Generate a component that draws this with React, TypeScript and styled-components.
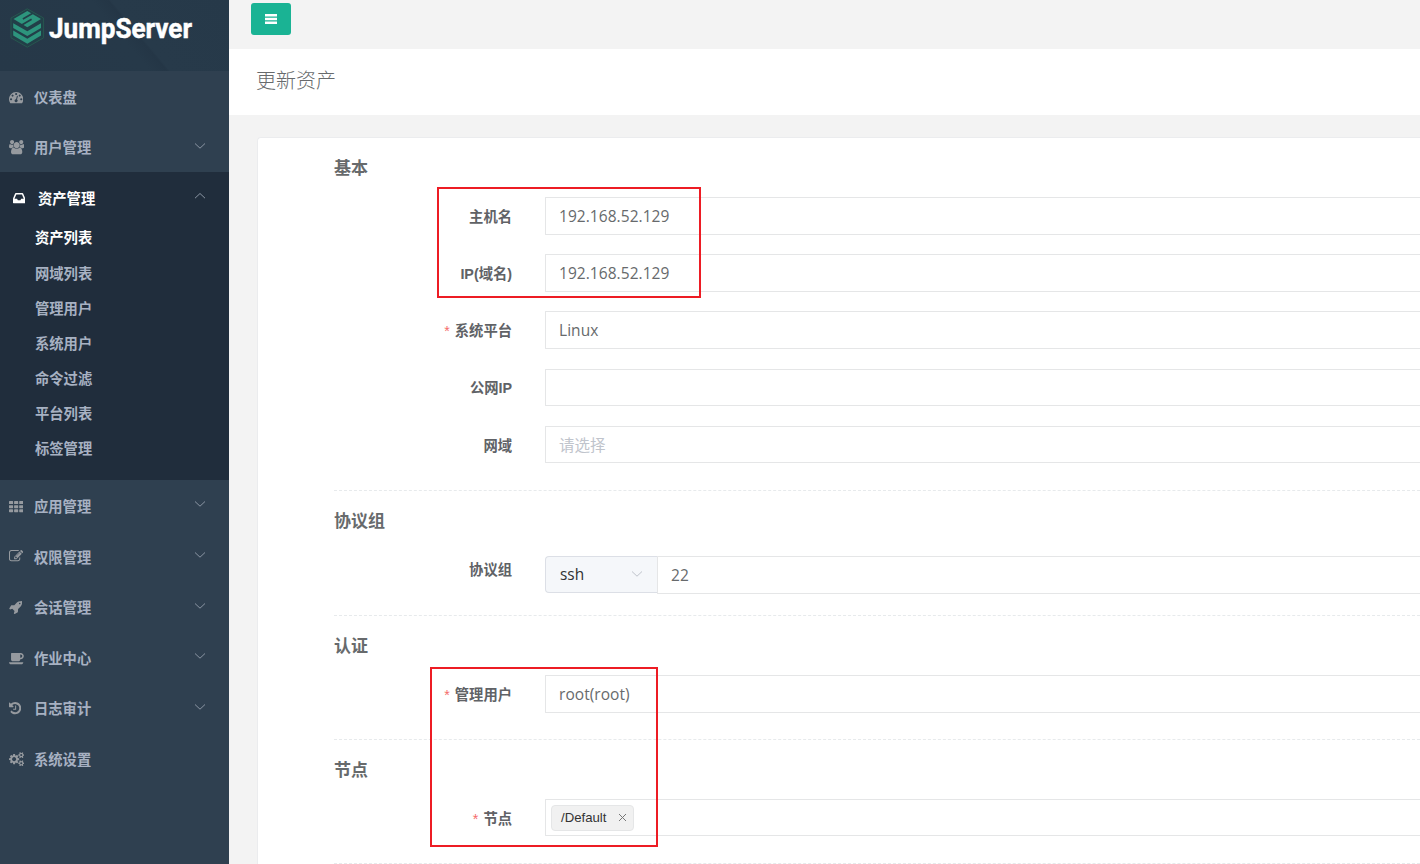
import React from 'react';
import styled, { createGlobalStyle, css } from 'styled-components';

const Global = createGlobalStyle`
  * { box-sizing: border-box; }
  html, body { margin: 0; height: 864px; overflow: hidden; }
  body {
    font-family: 'Open Sans', 'Noto Sans CJK SC', sans-serif;
    color: #676a6c;
    background: #f3f3f3;
  }
`;

const Layout = styled.div`
  display: flex;
  width: 1420px;
  height: 864px;
  overflow: hidden;
`;

const Sidebar = styled.nav`
  flex: 0 0 229px;
  background: #2f4050;
  color: #a7b1c2;
  font-family: 'Liberation Sans', 'Noto Sans CJK SC', sans-serif;
`;

const Brand = styled.header`
  height: 71px;
  padding: 8px 0 0 10px;
  display: flex;
  align-items: flex-start;
  background: linear-gradient(50deg, #263848 0%, #263949 52%, #243646 58%, #273a4a 59%, #263949 100%);
`;

const Group = styled.section<{ $active?: boolean }>`
  ${p => p.$active && css`
    background: #202d3c;
    padding-bottom: 14.8px;
  `}
`;

const MenuRow = styled.div<{ $active?: boolean }>`
  display: flex;
  align-items: center;
  height: 50.6px;
  padding: 0 23px 0 ${p => (p.$active ? 13 : 9)}px;
  font-size: 14.3px;
  font-weight: 700;
  color: ${p => (p.$active ? '#fff' : '#a7b1c2')};
`;

const MenuIcon = styled.span<{ $active?: boolean }>`
  display: flex;
  width: 25px;
  padding-top: 1px;
  color: ${p => (p.$active ? '#fff' : '#969a9f')};
`;

const MenuLabel = styled.span`
  flex: 1;
`;

const SubMenu = styled.ul`
  list-style: none;
  margin: -3.4px 0 0;
  padding: 0 0 0 35px;
`;

const SubItem = styled.li<{ $active?: boolean }>`
  display: flex;
  align-items: center;
  height: 35.15px;
  font-size: 14.3px;
  font-weight: 700;
  color: ${p => (p.$active ? '#fff' : '#a7b1c2')};
`;

const Main = styled.main`
  flex: 1;
  min-width: 0;
  background: #f3f3f3;
`;

const TopBar = styled.div`
  height: 49px;
  padding: 3px 22px;
`;

const ToggleButton = styled.button`
  display: flex;
  align-items: center;
  justify-content: center;
  width: 40px;
  height: 32px;
  padding: 0;
  border: 0;
  border-radius: 3px;
  background: #1ab394;
  color: #fff;
`;

const PageHeading = styled.div`
  height: 66px;
  padding: 0 27px 6px;
  display: flex;
  align-items: center;
  background: #fff;
`;

const PageTitle = styled.h1`
  margin: 0;
  font-size: 20px;
  font-weight: 300;
`;

const Card = styled.div`
  margin: 22px 0 0 28px;
  height: 760px;
  padding: 0 0 0 76px;
  background: #fff;
  border: 1px solid #ebecee;
  border-right: 0;
  border-radius: 4px 0 0 0;
`;

const Section = styled.section<{ $height: number }>`
  height: ${p => p.$height}px;
  border-bottom: 1px dashed #e7eaec;
`;

const SectionTitle = styled.h3<{ $gap: number }>`
  margin: 0;
  padding-top: 17px;
  height: ${p => p.$gap}px;
  font-size: 17px;
  line-height: 25px;
  font-weight: 700;
`;

const Field = styled.div`
  display: flex;
  height: 38px;
  margin-bottom: 19.2px;
`;

const Label = styled.label<{ $lift?: number }>`
  width: 178px;
  margin-right: 33px;
  text-align: right;
  font: 700 14.3px/${p => 40 - (p.$lift ?? 0)}px 'Liberation Sans', 'Noto Sans CJK SC', sans-serif;
  color: #606266;
  white-space: nowrap;
`;

const Star = styled.span`
  margin-right: 5px;
  font-weight: 400;
  color: #f56c6c;
`;

const Control = styled.div<{ $placeholder?: boolean; $short?: boolean }>`
  flex: 1;
  display: flex;
  align-items: center;
  height: ${p => (p.$short ? 37 : 38)}px;
  padding: 0 13px;
  border: 1px solid #e5e6e7;
  border-right: 0;
  border-radius: 1px 0 0 1px;
  background: #fff;
  font-size: 15.5px;
  letter-spacing: 0.05px;
  color: ${p => (p.$placeholder ? '#c0c4cc' : '#676a6c')};
`;

const Prepend = styled.div`
  display: flex;
  align-items: center;
  justify-content: space-between;
  width: 112px;
  height: 37px;
  padding: 0 14px;
  border: 1px solid #dcdfe6;
  border-right: 0;
  border-radius: 4px 0 0 4px;
  background: #f5f7fa;
  font-size: 15.4px;
  color: #303133;
`;

const TagBox = styled(Control)`
  height: 37px;
  padding: 0 5px;
`;

const Tag = styled.span`
  display: flex;
  align-items: center;
  justify-content: space-between;
  width: 83px;
  height: 26px;
  padding: 0 6px 0 9px;
  border: 1px solid #e5e6e7;
  border-radius: 4px;
  background: #f1f1f1;
  font: 13.2px 'Liberation Sans', sans-serif;
  letter-spacing: 0;
  color: #333;
`;

const Marker = styled.div<{ $x: number; $y: number; $w: number; $h: number }>`
  position: absolute;
  left: ${p => p.$x}px;
  top: ${p => p.$y}px;
  width: ${p => p.$w}px;
  height: ${p => p.$h}px;
  border: 2px solid #ed1c24;
`;

const ChevronSlot = styled.span`
  display: flex;
  padding-bottom: 2px;
`;

const Chevron = ({ up = false, color = '#8a95a3' }: { up?: boolean; color?: string }) => (
  <svg width="12" height="8" viewBox="0 0 12 8" fill="none" stroke={color} strokeWidth="1">
    <path d={up ? 'M1 6.2 6 1.5l5 4.7' : 'M1 1.5 6 6.2l5-4.7'} />
  </svg>
);

const Logo = () => (
  <svg width="35" height="41" viewBox="0 0 35 41">
    <path d="M17.3.8 33.6 10v19.8L17.3 39.2 1 29.8V10Z" fill="#223f48" stroke="#27574f" />
    <path d="M17.3 3 31 11 17.3 19.3 3.5 11Z" fill="#2d957d" />
    <path d="M22.4 5.4 12.9 11M12.2 16.8 21.6 11.2" stroke="#223f48" strokeWidth="1.7" />
    <path d="M3.2 15.2 17.3 23.2 31 15.2V20L17.3 28 3.2 20ZM3.2 22.6 17.3 30.8 31 22.6v4.8L17.3 35.8 3.2 27.4Z" fill="#2d957d" />
  </svg>
);

const Wordmark = () => (
  <svg width="150" height="42" viewBox="0 0 150 42">
    <text
      x="4"
      y="30"
      textLength="143"
      lengthAdjust="spacingAndGlyphs"
      fill="#fff"
      stroke="#fff"
      strokeWidth="0.5"
      fontFamily="Roboto, sans-serif"
      fontWeight="700"
      fontSize="28"
    >
      JumpServer
    </text>
  </svg>
);

interface Glyph { x?: number; w: number; d: string }

const glyphs: Record<string, Glyph> = {
  dashboard: {
    w: 1792,
    d: 'M384 1152q0-53-37.5-90.5t-90.5-37.5-90.5 37.5-37.5 90.5 37.5 90.5 90.5 37.5 90.5-37.5 37.5-90.5zm192-448q0-53-37.5-90.5t-90.5-37.5-90.5 37.5-37.5 90.5 37.5 90.5 90.5 37.5 90.5-37.5 37.5-90.5zm428 481l101-382q6-26-7.5-48.5t-38.5-29.5-48 6.5-30 39.5l-101 382q-60 5-107 43.5t-63 98.5q-20 77 20 146t117 89 146-20 89-117q16-60-6-117t-72-91zm660-33q0-53-37.5-90.5t-90.5-37.5-90.5 37.5-37.5 90.5 37.5 90.5 90.5 37.5 90.5-37.5 37.5-90.5zm-640-640q0-53-37.5-90.5t-90.5-37.5-90.5 37.5-37.5 90.5 37.5 90.5 90.5 37.5 90.5-37.5 37.5-90.5zm448 192q0-53-37.5-90.5t-90.5-37.5-90.5 37.5-37.5 90.5 37.5 90.5 90.5 37.5 90.5-37.5 37.5-90.5zm320 448q0 261-141 483-19 29-54 29h-1402q-35 0-54-29-141-221-141-483 0-182 71-348t191-286 286-191 348-71 348 71 286 191 191 286 71 348z',
  },
  users: {
    w: 1920,
    d: 'M593 896q-162 5-265 128h-134q-82 0-138-40.5t-56-118.5q0-353 124-353 6 0 43.5 21t97.5 42.5 119 21.5q67 0 133-23-5 37-5 66 0 139 81 256zm1071 637q0 120-73 189.5t-194 69.5h-874q-121 0-194-69.5t-73-189.5q0-53 3.5-103.5t14-109 26.5-108.5 43-97.5 62-81 85.5-53.5 111.5-20q10 0 43 21.5t73 48 107 48 135 21.5 135-21.5 107-48 73-48 43-21.5q61 0 111.5 20t85.5 53.5 62 81 43 97.5 26.5 108.5 14 109 3.5 103.5zm-1024-1277q0 106-75 181t-181 75-181-75-75-181 75-181 181-75 181 75 75 181zm704 384q0 159-112.5 271.5t-271.5 112.5-271.5-112.5-112.5-271.5 112.5-271.5 271.5-112.5 271.5 112.5 112.5 271.5zm576 225q0 78-56 118.5t-138 40.5h-134q-103-123-265-128 81-117 81-256 0-29-5-66 66 23 133 23 59 0 119-21.5t97.5-42.5 43.5-21q124 0 124 353zm-128-609q0 106-75 181t-181 75-181-75-75-181 75-181 181-75 181 75 75 181z',
  },
  inbox: {
    w: 1536,
    d: 'M1023 960h316q-1-3-2.5-8.5t-2.5-7.5l-212-496h-708l-212 496q-1 3-2.5 8.5t-2.5 7.5h316l95 192h320zm513 30v482q0 26-19 45t-45 19h-1408q-26 0-45-19t-19-45v-482q0-62 25-123l238-552q10-25 36.5-42t52.5-17h832q26 0 52.5 17t36.5 42l238 552q25 61 25 123z',
  },
  grid: {
    w: 1792,
    d: 'M60 256h400q52 0 52 60v264q0 60-60 60H60q-60 0-60-60V316q0-60 60-60zM700 256h392q60 0 60 60v264q0 60-60 60H700q-60 0-60-60V316q0-60 60-60zM1340 256h392q60 0 60 60v264q0 60-60 60h-392q-60 0-60-60V316q0-60 60-60zM60 768h392q60 0 60 60v264q0 60-60 60H60q-60 0-60-60V828q0-60 60-60zM700 768h392q60 0 60 60v264q0 60-60 60H700q-60 0-60-60V828q0-60 60-60zM1340 768h392q60 0 60 60v264q0 60-60 60h-392q-60 0-60-60V828q0-60 60-60zM60 1280h392q60 0 60 60v264q0 60-60 60H60q-60 0-60-60v-264q0-60 60-60zM700 1280h392q60 0 60 60v264q0 60-60 60H700q-60 0-60-60v-264q0-60 60-60zM1340 1280h392q60 0 60 60v264q0 60-60 60h-392q-60 0-60-60v-264q0-60 60-60z',
  },
  edit: {
    w: 1792,
    d: 'M888 1184l116-116-152-152-116 116v56h96v96h56zm440-720q-16-16-33 1l-350 350q-17 17-1 33t33-1l350-350q17-17 1-33zm80 594v190q0 119-84.5 203.5t-203.5 84.5h-832q-119 0-203.5-84.5t-84.5-203.5v-832q0-119 84.5-203.5t203.5-84.5h832q63 0 117 25 15 7 18 23 3 17-9 29l-49 49q-14 14-32 8-23-6-45-6h-832q-66 0-113 47t-47 113v832q0 66 47 113t113 47h832q66 0 113-47t47-113v-126q0-13 9-22l64-64q15-15 35-7t20 29zm-96-738l288 288-672 672h-288v-288zm444 132l-92 92-288-288 92-92q28-28 68-28t68 28l152 152q28 28 28 68t-28 68z',
  },
  rocket: {
    w: 1664,
    d: 'M1440 448q0-40-28-68t-68-28-68 28-28 68 28 68 68 28 68-28 28-68zm224-288q0 249-75.5 430.5t-253.5 360.5q-81 80-195 176l-20 379q-2 16-16 26l-384 224q-7 4-16 4-12 0-23-9l-64-64q-13-14-8-32l85-276-281-281-276 85q-3 1-9 1-14 0-23-9l-64-64q-17-19-5-39l224-384q10-14 26-16l379-20q96-114 176-195 188-187 358-258t431-71q14 0 24 9.5t10 22.5z',
  },
  coffee: {
    w: 1920,
    d: 'M1664 640q0-80-56-136t-136-56h-64v384h64q80 0 136-56t56-136zM0 1408h1792q0 106-75 181t-181 75H256q-106 0-181-75T0 1408zM1856 640q0 159-112.5 271.5T1472 1024h-64v32q0 92-66 158t-158 66H480q-92 0-158-66t-66-158V320q0-26 19-45t45-19h1152q159 0 271.5 112.5T1856 640z',
  },
  history: {
    x: 128,
    w: 1536,
    d: 'M1664 896q0 156-61 298t-164 245-245 164-298 61q-172 0-327-72.5t-264-204.5q-7-10-6.5-22.5t8.5-20.5l137-138q10-9 25-9 16 2 23 12 73 95 179 147t225 52q104 0 198.5-40.5t163.5-109.5 109.5-163.5 40.5-198.5-40.5-198.5-109.5-163.5-163.5-109.5-198.5-40.5q-98 0-188 35.5t-160 101.5l137 138q31 30 14 69-17 40-59 40h-448q-26 0-45-19t-19-45v-448q0-42 40-59 39-17 69 14l130 129q107-101 244.5-156.5t284.5-55.5q156 0 298 61t245 164 164 245 61 298zm-640-288v448q0 14-9 23t-23 9h-320q-14 0-23-9t-9-23v-64q0-14 9-23t23-9h224v-352q0-14 9-23t23-9h64q14 0 23 9t9 23z',
  },
  cogs: {
    w: 1920,
    d: 'M896 896q0-106-75-181t-181-75-181 75-75 181 75 181 181 75 181-75 75-181zm768 512q0-52-38-90t-90-38-90 38-38 90q0 53 37.5 90.5t90.5 37.5 90.5-37.5 37.5-90.5zm0-1024q0-52-38-90t-90-38-90 38-38 90q0 53 37.5 90.5t90.5 37.5 90.5-37.5 37.5-90.5zm-384 421v185q0 10-7 19.5t-16 10.5l-155 24q-11 35-32 76 34 48 90 115 7 11 7 20 0 12-7 19-23 30-82.5 89.5t-78.5 59.5q-11 0-21-7l-115-90q-37 19-77 31-11 108-23 155-7 24-30 24h-186q-11 0-20-7.5t-10-17.5l-23-153q-34-10-75-31l-118 89q-7 7-20 7-11 0-21-8-144-133-144-160 0-9 7-19 10-14 41-53t47-61q-23-44-35-82l-152-24q-10-1-17-9.5t-7-19.5v-185q0-10 7-19.5t16-10.5l155-24q11-35 32-76-34-48-90-115-7-11-7-20 0-12 7-20 22-30 82-89t79-59q11 0 21 7l115 90q34-18 77-32 11-108 23-154 7-24 30-24h186q11 0 20 7.5t10 17.5l23 153q34 10 75 31l118-89q8-7 20-7 11 0 21 8 144 133 144 160 0 8-7 19-12 16-42 54t-45 60q23 48 34 82l152 23q10 2 17 10.5t7 19.5zm640 533v140q0 16-149 31-12 27-30 52 51 113 51 138 0 4-4 7-122 71-124 71-8 0-46-47t-52-68q-20 2-30 2t-30-2q-14 21-52 68t-46 47q-2 0-124-71-4-3-4-7 0-25 51-138-18-25-30-52-149-15-149-31v-140q0-16 149-31 13-29 30-52-51-113-51-138 0-4 4-7 4-2 35-20t59-34 30-16q8 0 46 46.5t52 67.5q20-2 30-2t30 2q51-71 92-112l6-2q4 0 124 70 4 3 4 7 0 25-51 138 17 23 30 52 149 15 149 31zm0-1024v140q0 16-149 31-12 27-30 52 51 113 51 138 0 4-4 7-122 71-124 71-8 0-46-47t-52-68q-20 2-30 2t-30-2q-14 21-52 68t-46 47q-2 0-124-71-4-3-4-7 0-25 51-138-18-25-30-52-149-15-149-31v-140q0-16 149-31 13-29 30-52-51-113-51-138 0-4 4-7 4-2 35-20t59-34 30-16q8 0 46 46.5t52 67.5q20-2 30-2t30 2q51-71 92-112l6-2q4 0 124 70 4 3 4 7 0 25-51 138 17 23 30 52 149 15 149 31z',
  },
};

const Icon = ({ name }: { name: string }) => {
  const { x = 0, w, d } = glyphs[name];
  return (
    <svg width={(w / 1792) * 14.3} height="14.3" viewBox={`${x} 0 ${w} 1792`} fill="currentColor">
      <path d={d} />
    </svg>
  );
};

interface Item { label: string; icon: string; arrow?: boolean }

const before: Item[] = [
  { label: '仪表盘', icon: 'dashboard' },
  { label: '用户管理', icon: 'users', arrow: true },
];
const after: Item[] = [
  { label: '应用管理', icon: 'grid', arrow: true },
  { label: '权限管理', icon: 'edit', arrow: true },
  { label: '会话管理', icon: 'rocket', arrow: true },
  { label: '作业中心', icon: 'coffee', arrow: true },
  { label: '日志审计', icon: 'history', arrow: true },
  { label: '系统设置', icon: 'cogs' },
];
const assets = ['资产列表', '网域列表', '管理用户', '系统用户', '命令过滤', '平台列表', '标签管理'];

const MenuEntry = ({ label, icon, arrow }: Item) => (
  <MenuRow>
    <MenuIcon><Icon name={icon} /></MenuIcon>
    <MenuLabel>{label}</MenuLabel>
    {arrow && <ChevronSlot><Chevron /></ChevronSlot>}
  </MenuRow>
);

const FieldLabel = ({ text, required, lift }: { text: string; required?: boolean; lift?: number }) => (
  <Label $lift={lift}>{required && <Star>*</Star>}{text}</Label>
);

export default function App() {
  return (
    <>
      <Global />
      <Layout>
        <Sidebar>
          <Brand>
            <Logo />
            <Wordmark />
          </Brand>
          <Group>{before.map(i => <MenuEntry key={i.label} {...i} />)}</Group>
          <Group $active>
            <MenuRow $active>
              <MenuIcon $active><Icon name="inbox" /></MenuIcon>
              <MenuLabel>资产管理</MenuLabel>
              <ChevronSlot><Chevron up /></ChevronSlot>
            </MenuRow>
            <SubMenu>
              {assets.map((a, i) => <SubItem key={a} $active={i === 0}>{a}</SubItem>)}
            </SubMenu>
          </Group>
          <Group>{after.map(i => <MenuEntry key={i.label} {...i} />)}</Group>
        </Sidebar>
        <Main>
          <TopBar>
            <ToggleButton>
              <svg width="12" height="10" viewBox="0 0 12 10" fill="currentColor">
                <path d="M0 0h12v2.4H0zM0 3.8h12v2.4H0zM0 7.6h12V10H0z" />
              </svg>
            </ToggleButton>
          </TopBar>
          <PageHeading><PageTitle>更新资产</PageTitle></PageHeading>
          <Card>
            <Section $height={353}>
              <SectionTitle $gap={59}>基本</SectionTitle>
              <Field><FieldLabel text="主机名" /><Control>192.168.52.129</Control></Field>
              <Field><FieldLabel text="IP(域名)" /><Control>192.168.52.129</Control></Field>
              <Field><FieldLabel text="系统平台" required /><Control>Linux</Control></Field>
              <Field><FieldLabel text="公网IP" lift={1} /><Control $short /></Field>
              <Field><FieldLabel text="网域" /><Control $placeholder $short>请选择</Control></Field>
            </Section>
            <Section $height={125}>
              <SectionTitle $gap={65}>协议组</SectionTitle>
              <Field>
                <FieldLabel text="协议组" lift={12} />
                <Prepend>ssh<ChevronSlot><Chevron color="#c0c4cc" /></ChevronSlot></Prepend>
                <Control>22</Control>
              </Field>
            </Section>
            <Section $height={124}>
              <SectionTitle $gap={59}>认证</SectionTitle>
              <Field><FieldLabel text="管理用户" required /><Control>root(root)</Control></Field>
            </Section>
            <Section $height={124}>
              <SectionTitle $gap={59}>节点</SectionTitle>
              <Field>
                <FieldLabel text="节点" required />
                <TagBox>
                  <Tag>
                    /Default
                    <svg width="9" height="9" viewBox="0 0 9 9" stroke="#777" strokeWidth="1"><path d="m1 1 7 7M8 1 1 8" /></svg>
                  </Tag>
                </TagBox>
              </Field>
            </Section>
          </Card>
        </Main>
      </Layout>
      <Marker $x={437} $y={187} $w={264} $h={111} />
      <Marker $x={430} $y={667} $w={228} $h={180} />
    </>
  );
}
